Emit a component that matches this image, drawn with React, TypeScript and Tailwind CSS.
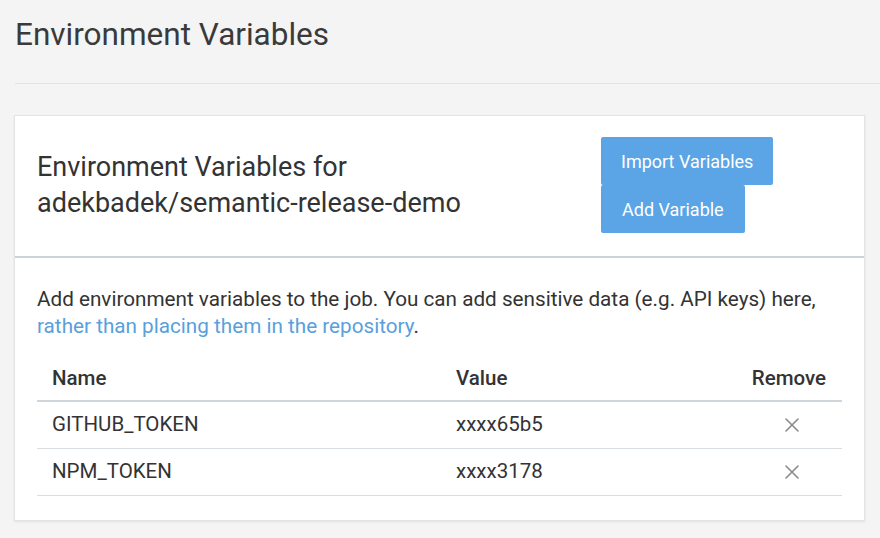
const variables = [
  { name: "GITHUB_TOKEN", value: "xxxx65b5" },
  { name: "NPM_TOKEN", value: "xxxx3178" },
];

const RemoveIcon = () => (
  <svg width="14" height="14" viewBox="0 0 14 14" fill="none" className="block">
    <path d="M1 1L13 13M13 1L1 13" stroke="#8a8a8a" strokeWidth="1.6" strokeLinecap="round" />
  </svg>
);

function VariableRow({ name, value }: { name: string; value: string }) {
  return (
    <tr className="border-b border-[#d9dee2]">
      <td className="h-[47px] pl-[15px] align-middle">{name}</td>
      <td className="h-[47px] pl-[15px] align-middle">{value}</td>
      <td className="h-[47px] pr-[43px] align-middle">
        <div className="flex justify-end">
          <button className="flex items-center">
            <RemoveIcon />
          </button>
        </div>
      </td>
    </tr>
  );
}

export default function App() {
  return (
    <div
      className="min-h-[538px] w-[880px] bg-[#f4f4f4] text-[#333]"
      style={{ fontFamily: "Roboto, 'Liberation Sans', sans-serif" }}
    >
      <div className="pl-[15px]">
        <h1 className="pt-[16px] pb-[30px] text-[31.5px] leading-[37px] text-[#3a3a3a]">
          Environment Variables
        </h1>
        <div className="h-px bg-[#e3e3e3]" />
      </div>

      <div className="px-[14px] pt-[31px]">
        <div className="w-[851px] border border-[#e4e4e4] bg-white shadow-[0_1px_2px_rgba(0,0,0,0.08)]">
          <div className="flex items-center border-b-2 border-[#cbd3da] px-[22px] pt-[21px] pb-[23px]">
            <h2 className="w-[564px] text-[27px] leading-[36px] text-[#333]">
              Environment Variables for
              <br />
              adekbadek/semantic-release-demo
            </h2>
            <div className="flex flex-col items-start">
              <button className="h-[48px] rounded-[2px] bg-[#5ba5e6] px-[20px] text-[18px] text-white">
                Import Variables
              </button>
              <button className="h-[48px] rounded-[2px] bg-[#5ba5e6] px-[21px] text-[18px] text-white">
                Add Variable
              </button>
            </div>
          </div>

          <div className="px-[22px] pt-[28px] pb-[24px]">
            <p className="text-[20.7px] leading-[27px] text-[#333]">
              Add environment variables to the job. You can add sensitive data (e.g. API keys) here,
              <br />
              <a className="text-[#5a9fdc]">rather than placing them in the repository</a>.
            </p>

            <table className="mt-[17px] w-[805px] border-collapse text-[20.5px] text-[#333]">
              <thead>
                <tr className="border-b-2 border-[#cfd6dc]">
                  <th className="h-[44px] w-[404px] pl-[15px] text-left align-middle font-medium">Name</th>
                  <th className="h-[44px] pl-[15px] text-left align-middle font-medium">Value</th>
                  <th className="h-[44px] pr-[16px] text-right align-middle font-medium">Remove</th>
                </tr>
              </thead>
              <tbody>
                {variables.map((v) => (
                  <VariableRow key={v.name} name={v.name} value={v.value} />
                ))}
              </tbody>
            </table>
          </div>
        </div>
      </div>
    </div>
  );
}
